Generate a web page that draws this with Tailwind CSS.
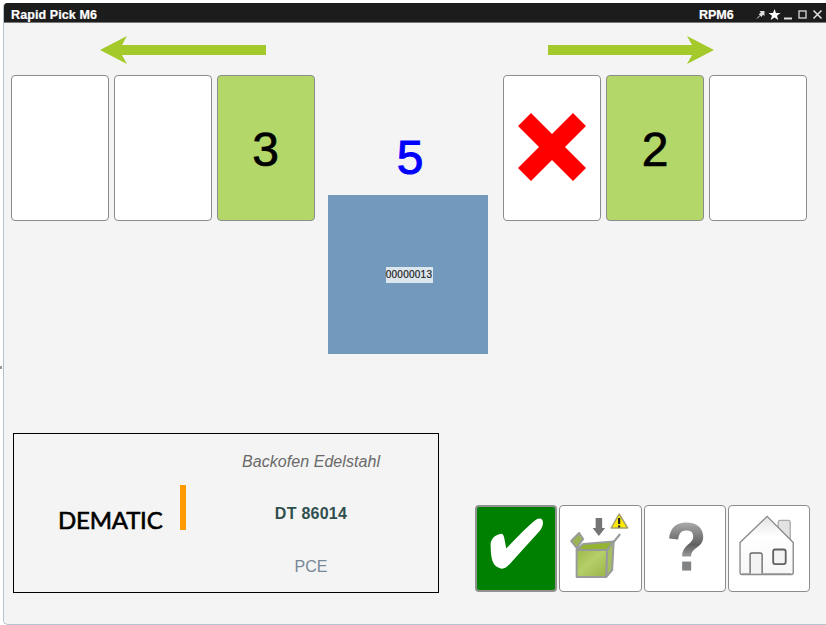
<!DOCTYPE html>
<html lang="de">
<head>
<meta charset="utf-8">
<title>Rapid Pick M6</title>
<script src="https://cdn.jsdelivr.net/npm/@tailwindcss/browser@4"></script>
</head>
<body class="w-[826px] h-[625px] overflow-hidden bg-white pl-[3px] pt-[3px] relative font-['Liberation_Sans',Arial,sans-serif]">
<div class="absolute left-0 top-[366px] w-[2px] h-[3px] bg-[#999]"></div>
<div class="w-[823px] h-[622px] flex flex-col bg-[#f4f4f4] border-l border-b border-[#b5c3cb] rounded-tl-[4px] rounded-bl-[5px] overflow-hidden">
  <header class="-ml-px h-5 shrink-0 bg-[#1c1c1c] border-b border-[#777] flex items-center pl-2 pr-[3px] pt-[5px] text-white text-[12px] font-bold leading-none whitespace-nowrap">
    <span class="w-[88px] text-[12.500px] tracking-[0px] [-webkit-text-stroke:0.2px_white]"><span class="tracking-[0.1px]">Rapid Pick M6</span></span>
    <span class="ml-auto w-[38px] text-[12.500px] tracking-[0px] mr-[19px] [-webkit-text-stroke:0.2px_white]">RPM6</span>
    <svg class="w-[67px] h-[13px] -mt-[2px] overflow-visible" viewBox="0 0 67 13" fill="none">
      <path d="M3.500 3H8.500V8L7 6.800L5.500 9L2.700 6.200L4.900 4.600Z" fill="#ddd"/><path d="M4 7.500L1 10.500" stroke="#ddd"/>
      <path d="M18.500 1L20 5H24.500L21 7.700L22.300 12L18.500 9.400L14.700 12L16 7.700L12.500 5H17Z" fill="#fff"/>
      <path d="M28 10.500H36" stroke="#ddd" stroke-width="2"/>
      <rect x="43" y="3" width="7" height="7" stroke="#ccc" stroke-width="1.400"/>
      <path d="M57.500 2.500L65.500 10.500M65.500 2.500L57.500 10.500" stroke="#ddd" stroke-width="1.600"/>
    </svg>
  </header>
  <main class="flex flex-col pl-[7px]">
    <div class="flex h-[332px]">
      <section class="w-[304px] pt-[13px]">
        <svg class="ml-[89px] w-[167px] h-[28px]" viewBox="0 0 167 28"><path d="M0 14L27 0L22 9H166V19H22L27 28Z" fill="#a4c92a"/></svg>
        <div class="mt-[11px] flex gap-[5px]">
          <div class="w-[98px] h-[146px] rounded-[4px] border border-[#8c8c8c] bg-white"></div>
          <div class="w-[98px] h-[146px] rounded-[4px] border border-[#8c8c8c] bg-white"></div>
          <div class="w-[98px] h-[146px] rounded-[4px] border border-[#8c8c8c] bg-[#b3d869] flex items-center justify-center text-[48px] text-black pt-[4px] pr-px [-webkit-text-stroke:0.7px_black]">3</div>
        </div>
      </section>
      <section class="ml-[13px] w-[160px] flex flex-col">
        <div class="h-[172px] pt-[111px] pl-[4px] text-center text-[48px] leading-[48px] text-[#0000ff] [-webkit-text-stroke:1px_#00f]">5</div>
        <div class="w-[160px] h-[159px] bg-[#739abc] flex items-center justify-center">
          <span class="ml-[2px] w-[47px] h-[16px] bg-[#dce6ee] text-[#222] text-[10px] leading-[16px] text-center whitespace-nowrap tracking-[0.250px] [-webkit-text-stroke:0.2px_#222]">00000013</span>
        </div>
      </section>
      <section class="ml-[15px] w-[304px] pt-[13px]">
        <svg class="ml-[44px] w-[167px] h-[28px]" viewBox="0 0 167 28"><path d="M167 14L140 0L145 9H1V19H145L140 28Z" fill="#a4c92a"/></svg>
        <div class="mt-[11px] flex gap-[5px]">
          <div class="w-[98px] h-[146px] rounded-[4px] border border-[#8c8c8c] bg-white flex items-center justify-center">
            <svg class="w-[68px] h-[68px] -mt-[2px] -ml-px" viewBox="0 0 68 68"><path d="M13 0L34 21L55 0L68 13L47 34L68 55L55 68L34 47L13 68L0 55L21 34L0 13Z" fill="#fe0000"/></svg>
          </div>
          <div class="w-[98px] h-[146px] rounded-[4px] border border-[#8c8c8c] bg-[#b3d869] flex items-center justify-center text-[48px] text-black pt-[4px] [-webkit-text-stroke:0.7px_black]">2</div>
          <div class="w-[98px] h-[146px] rounded-[4px] border border-[#8c8c8c] bg-white"></div>
        </div>
      </section>
    </div>
    <div class="mt-[78px] flex items-start pl-[2px]">
      <section class="w-[426px] h-[160px] border border-black flex">
        <div class="w-[173px] pl-[44px] pt-[51px] flex items-start">
          <span class="mt-[19px] w-[122px] font-['Lato',sans-serif] text-[24px] leading-[32px] text-black tracking-[-0.200px] [-webkit-text-stroke:0.6px_black]">DEMATIC</span>
          <span class="w-[6px] h-[45px] shrink-0 bg-[#ff9b00]"></span>
        </div>
        <div class="w-[248px] text-center text-[16px] leading-[20px] whitespace-nowrap">
          <p class="mt-[18px] italic text-[#696969] tracking-[0.060px]">Backofen Edelstahl</p>
          <p class="mt-[32px] font-bold text-[#2f4f4f] tracking-[0.250px]">DT 86014</p>
          <p class="mt-[33px] text-[#778899]">PCE</p>
        </div>
      </section>
      <nav class="mt-[72px] ml-[36px] flex gap-[2px]">
        <button class="w-[82.300px] h-[87px] rounded-[4px] border-2 border-[#929292] bg-[#008000]" aria-label="OK">
          <svg class="w-full h-full" viewBox="0 0 80 84"><path d="M14 40C13 33 18 28 25 27C28 27 28 34 30 42C40 31 54 17 61 12C69 9 69 18 64 24L36 55C31 61 27 64 23 62C16 60 14 52 14 40Z" fill="#fff"/></svg>
        </button>
        <button class="w-[82.300px] h-[87px] rounded-[4px] border-[1.500px] border-[#8c8c8c] bg-white" aria-label="Box">
          <svg class="w-full h-full" viewBox="0 0 80 85">
            <defs><linearGradient id="box" x1="0" y1="0" x2="1" y2="1"><stop offset="0" stop-color="#9dbb48"/><stop offset=".45" stop-color="#b5cf69"/><stop offset="1" stop-color="#98b545"/></linearGradient></defs>
            <g stroke="#999b9b" stroke-width="2" stroke-linejoin="round">
              <path d="M16.500 44L23 38L53.500 35.500L47 44Z" fill="#93b532"/>
              <path d="M47 44L53.500 35.500L52 64L46 71Z" fill="#a5be61"/>
              <path d="M16.500 44H47L46 71H16.500Z" fill="url(#box)"/>
              <path d="M16.500 42L11 35L19 27L23 33Z" fill="#9cb554"/>
              <path d="M53.500 36L60 28" fill="none"/>
            </g>
            <path d="M35.500 12H42V22H45L38.700 30L32.500 22H35.500Z" fill="#757475"/>
            <path d="M59 8L67.500 22H51Z" fill="#ffea00" stroke="#a5a16c" stroke-width="1.500" stroke-linejoin="round"/>
            <path d="M59 12V18M59 19.500V21.500" stroke="#222" stroke-width="2.200"/>
          </svg>
        </button>
        <button class="w-[82.300px] h-[87px] rounded-[4px] border-[1.500px] border-[#8c8c8c] bg-white" aria-label="Hilfe">
          <svg class="w-full h-full" viewBox="0 0 80 84">
            <defs><linearGradient id="q" x1="0" y1="0" x2="0" y2="1"><stop offset="0" stop-color="#aaa"/><stop offset=".65" stop-color="#606060"/><stop offset="1" stop-color="#999"/></linearGradient></defs>
            <path d="M24 32C25 21 31 16 41 16C52 16 58 22 58 30C58 42 46 40 46 50H37C37 38 48 38 48 30C48 26 46 24 41 24C36 24 34 27 33 33Z" fill="url(#q)"/><path d="M37 55H46V64H37Z" fill="#808284"/>
          </svg>
        </button>
        <button class="w-[82.300px] h-[87px] rounded-[4px] border-[1.500px] border-[#8c8c8c] bg-white" aria-label="Start">
          <svg class="w-full h-full" viewBox="0 0 80 84" fill="none" stroke="#858585" stroke-width="1.300" stroke-linejoin="round">
            <defs><linearGradient id="h" x1="0" y1="0" x2="0" y2="1"><stop offset="0" stop-color="#e4e4e4"/><stop offset=".35" stop-color="#fff"/><stop offset="1" stop-color="#f6f6f6"/></linearGradient></defs>
            <path d="M49 22V16Q49 14 51 14H59Q61 14 61 16V34Z" fill="#e2e2e2" stroke="#aaa"/>
            <path d="M11 36L38 10L64 36V66Q64 68 62 68H13Q11 68 11 66Z" fill="url(#h)"/>
            <path d="M13 67H62" stroke="#aaa"/>
            <path d="M21 67V48Q21 46.500 23 46.500H31Q33 46.500 33 48V67" stroke="#666" fill="#f3f3f3"/>
            <rect x="44" y="43" width="12.500" height="14.500" rx="2" stroke="#606060" stroke-width="1.800" fill="#f3f3f3"/>
          </svg>
        </button>
      </nav>
    </div>
  </main>
</div>
</body>
</html>
